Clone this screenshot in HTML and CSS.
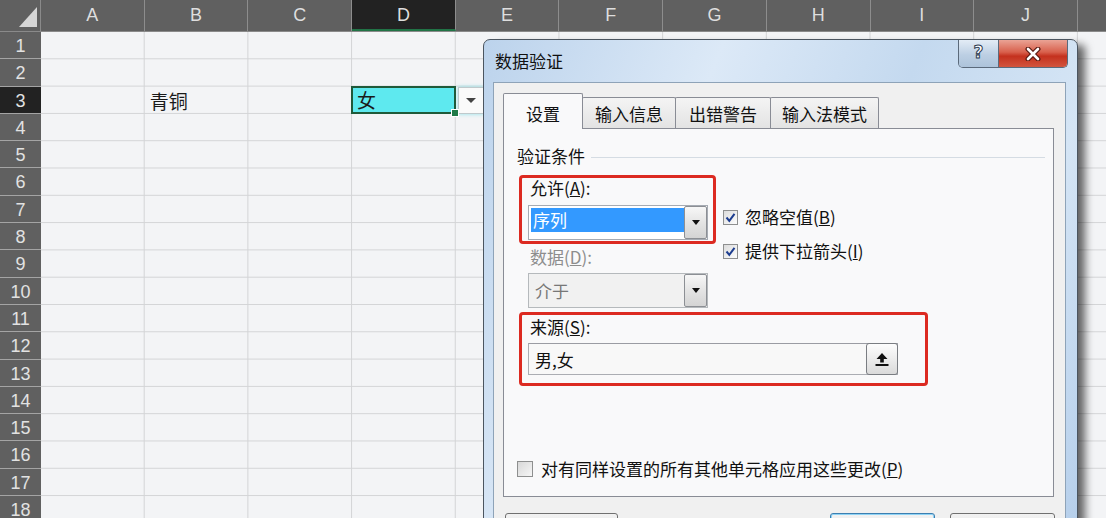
FILE: index.html
```html
<!DOCTYPE html>
<html lang="zh-CN">
<head>
    <meta charset="UTF-8">
    <meta name="viewport" content="width=device-width, initial-scale=1.0">
    <title>数据验证</title>
    <link rel="stylesheet" href="styles.css">
</head>
<body>
    <div class="sheet">
        <div class="col-heads">
            <div class="corner"><span class="corner-tri"></span></div>
            <div class="col-head">A</div>
            <div class="col-head">B</div>
            <div class="col-head">C</div>
            <div class="col-head active">D</div>
            <div class="col-head">E</div>
            <div class="col-head">F</div>
            <div class="col-head">G</div>
            <div class="col-head">H</div>
            <div class="col-head">I</div>
            <div class="col-head">J</div>
            <div class="col-head"></div>
        </div>
        <div class="sheet-body">
            <div class="row-heads">
                <div class="row-head">1</div>
                <div class="row-head">2</div>
                <div class="row-head active">3</div>
                <div class="row-head">4</div>
                <div class="row-head">5</div>
                <div class="row-head">6</div>
                <div class="row-head">7</div>
                <div class="row-head">8</div>
                <div class="row-head">9</div>
                <div class="row-head">10</div>
                <div class="row-head">11</div>
                <div class="row-head">12</div>
                <div class="row-head">13</div>
                <div class="row-head">14</div>
                <div class="row-head">15</div>
                <div class="row-head">16</div>
                <div class="row-head">17</div>
                <div class="row-head">18</div>
            </div>
            <div class="cells">
                <div class="cell cell-b3">青铜</div>
                <div class="cell cell-d3">女<span class="fill-handle"></span></div>
                <div class="cell-drop"><i></i></div>
            </div>
        </div>
    </div>

    <div class="dialog">
        <div class="titlebar">
            <span class="title">数据验证</span>
            <div class="caption-btns">
                <span class="cap-help">?</span>
                <span class="cap-close">
                    <svg width="16" height="14" viewBox="0 0 16 14">
                        <path d="M3 2 L13 12 M13 2 L3 12" stroke="#5a1a12" stroke-width="5" stroke-linecap="round"/>
                        <path d="M3 2 L13 12 M13 2 L3 12" stroke="#fff" stroke-width="2.6" stroke-linecap="round"/>
                    </svg>
                </span>
            </div>
        </div>

        <div class="client">
            <div class="tabs">
                <div class="tab active">设置</div>
                <div class="tab tab-info">输入信息</div>
                <div class="tab tab-error">出错警告</div>
                <div class="tab tab-ime">输入法模式</div>
            </div>

            <div class="panel">
                <div class="group-title"><span>验证条件</span><i class="rule"></i></div>

                <div class="cond">
                    <div class="cond-left">
                        <div class="mark allow">
                            <div class="label">允许(<u>A</u>):</div>
                            <div class="combo">
                                <span class="combo-val"><span class="selected">序列</span></span>
                                <span class="drop-btn"><i></i></span>
                            </div>
                        </div>
                        <div class="label dim data-label">数据(<u>D</u>):</div>
                        <div class="combo disabled data-combo">
                            <span class="combo-val">介于</span>
                            <span class="drop-btn"><i></i></span>
                        </div>
                    </div>
                    <div class="cond-right">
                        <div class="check">
                            <span class="box"><svg width="11" height="11" viewBox="0 0 11 11"><path d="M1.5 5.5 L4.3 8.8 L9.5 1.8" fill="none" stroke="#1d3d8f" stroke-width="2"/></svg></span>
                            <span>忽略空值(<u>B</u>)</span>
                        </div>
                        <div class="check second">
                            <span class="box"><svg width="11" height="11" viewBox="0 0 11 11"><path d="M1.5 5.5 L4.3 8.8 L9.5 1.8" fill="none" stroke="#1d3d8f" stroke-width="2"/></svg></span>
                            <span>提供下拉箭头(<u>I</u>)</span>
                        </div>
                    </div>
                </div>

                <div class="mark source">
                    <div class="label">来源(<u>S</u>):</div>
                    <div class="textbox">
                        <span class="text-val">男,女</span>
                        <span class="ref-btn">
                            <svg width="16" height="16" viewBox="0 0 16 16">
                                <path d="M8 2 L2.5 8 H6.2 V11.5 H9.8 V8 H13.5 Z" fill="#111"/>
                                <rect x="1.5" y="13" width="13" height="2" fill="#111"/>
                            </svg>
                        </span>
                    </div>
                </div>

                <div class="check apply">
                    <span class="box empty"></span>
                    <span>对有同样设置的所有其他单元格应用这些更改(<u>P</u>)</span>
                </div>
            </div>

            <div class="buttons">
                <div class="btn btn-clear"></div>
                <div class="btn btn-ok"></div>
                <div class="btn btn-cancel"></div>
            </div>
        </div>
    </div>
</body>
</html>
```

FILE: styles.css
```css
body {
    margin: 0;
    width: 1106px;
    height: 518px;
    overflow: hidden;
    background-color: #f3f4f6;
    font-family: "Liberation Sans", Arial, sans-serif;
    position: relative;
}

/* spreadsheet */
.sheet {
    display: flex;
    flex-direction: column;
}
.col-heads {
    display: flex;
    height: 32px;
    background: #606060;
    border-bottom: 1px solid #8a8a8a;
    box-sizing: border-box;
}
.corner {
    width: 41px;
    flex: none;
    position: relative;
    border-right: 1px solid #8a8a8a;
    box-sizing: border-box;
}
.corner-tri {
    position: absolute;
    right: 3px;
    bottom: 4px;
    width: 0;
    height: 0;
    border-left: 18px solid transparent;
    border-bottom: 20px solid #d6d6d6;
}
.col-head {
    width: 103.7px;
    flex: none;
    box-sizing: border-box;
    border-right: 1px solid #8d8d8d;
    color: #dedede;
    font-size: 18px;
    line-height: 31px;
    text-align: center;
}
.col-head.active {
    background: #222;
    border-bottom: 2px solid #217346;
    line-height: 30px;
}
.sheet-body {
    display: flex;
}
.row-heads {
    width: 41px;
    flex: none;
    background: #606060;
}
.row-head {
    height: 27.3px;
    box-sizing: border-box;
    border-bottom: 1px solid #a4a4a4;
    color: #e2e2e2;
    font-size: 18px;
    line-height: 28px;
    text-align: center;
}
.row-head.active {
    background: #222;
}
.cells {
    display: grid;
    grid-template-columns: repeat(11, 103.7px);
    grid-template-rows: repeat(18, 27.3px);
    background-image:
        linear-gradient(to right, transparent calc(100% - 1px), #d3d4d6 0),
        linear-gradient(to bottom, transparent calc(100% - 1px), #d3d4d6 0);
    background-size: 103.7px 27.3px;
}
.cell {
    font-family: "Noto Sans CJK SC", sans-serif;
    font-size: 19px;
    color: #1a1a1a;
    padding-left: 5px;
    display: flex;
    align-items: center;
}
.cell-b3 {
    grid-column: 2;
    grid-row: 3;
}
.cell-d3 {
    grid-column: 4;
    grid-row: 3;
    position: relative;
    background: #5ee9ef;
    border: 2px solid #1f5a3a;
    margin: -1px 0 0 -1px;
    padding-left: 4px;
}
.fill-handle {
    position: absolute;
    right: -5px;
    bottom: -5px;
    width: 6px;
    height: 6px;
    background: #1f7a48;
    border: 1px solid #fff;
}
.cell-drop {
    grid-column: 5;
    grid-row: 3;
    width: 24px;
    margin-left: 2px;
    background: #fafafa;
    border: 1px solid #bfc9cc;
    box-shadow: 0 0 4px #8fe3ea;
    display: flex;
    align-items: center;
    justify-content: center;
}
.cell-drop i {
    width: 0;
    height: 0;
    border-left: 5px solid transparent;
    border-right: 5px solid transparent;
    border-top: 5px solid #444;
}

/* dialog */
.dialog {
    position: absolute;
    left: 483px;
    top: 39px;
    width: 595px;
    height: 520px;
    box-sizing: border-box;
    border: 1px solid #4b5560;
    border-radius: 7px 7px 0 0;
    background: linear-gradient(112deg, #bcd3ec 0%, #dce9f7 30%, #c4d9ef 55%, #d5e5f5 78%, #b3cdea 100%);
    box-shadow: 10px 3px 8px -3px rgba(0, 0, 0, 0.6);
    font-family: "Noto Sans CJK SC", sans-serif;
    font-size: 17px;
    color: #111;
}
.titlebar {
    height: 42px;
    display: flex;
    justify-content: space-between;
    padding: 0 9px 0 11px;
}
.title {
    line-height: 20px;
    padding-top: 11px;
}
.caption-btns {
    display: flex;
    height: 27px;
    border: 1px solid #5b6a7b;
    border-top: none;
    border-radius: 0 0 5px 5px;
    overflow: hidden;
}
.cap-help {
    width: 39px;
    background: linear-gradient(#e3ecf6, #bccfe3 55%, #adc3da);
    border-right: 1px solid #5b6a7b;
    text-align: center;
    font-family: "DejaVu Sans", sans-serif;
    font-size: 17px;
    font-weight: bold;
    line-height: 25px;
    color: #fff;
    -webkit-text-stroke: 1px #2c3b50;
}
.cap-close {
    width: 68px;
    background: linear-gradient(#eaa395, #d8604c 45%, #c4311e 60%, #d2553e);
    display: flex;
    align-items: center;
    justify-content: center;
}
.client {
    margin: 0 11px 0 9px;
    border: 1px solid #8ea3b8;
    background: #f0f0f0;
    padding: 10px 11px 0 9px;
    height: 480px;
}
.tabs {
    display: flex;
    align-items: flex-end;
    height: 35px;
}
.tab {
    box-sizing: border-box;
    height: 31px;
    border: 1px solid #898c95;
    border-bottom: none;
    border-radius: 2px 2px 0 0;
    margin-left: -1px;
    background: linear-gradient(#f4f4f4, #e3e3e3);
    line-height: 20px;
    padding-top: 6px;
    text-align: center;
}
.tab.active {
    width: 80px;
    height: 36px;
    margin-left: 0;
    margin-bottom: -1px;
    padding-top: 10px;
    background: #f9f9fa;
    position: relative;
    z-index: 1;
}
.tab-info { width: 94px; }
.tab-error { width: 96px; }
.tab-ime { width: 109px; }
.panel {
    box-sizing: border-box;
    width: 551px;
    height: 369px;
    border: 1px solid #898c95;
    background: #f9f9fa;
    padding: 17px 0 0 13px;
}
.group-title {
    display: flex;
    align-items: center;
    line-height: 20px;
}
.group-title .rule {
    flex: 1;
    height: 0;
    border-top: 1px solid #d5dce3;
    margin: 2px 8px 0 6px;
}
.cond {
    display: flex;
    margin: 9px 0 0 2px;
}
.cond-left {
    width: 197px;
}
.mark {
    border: 3px solid #dc2a21;
    border-radius: 4px;
    padding: 0 5px 1px 6px;
}
.label {
    line-height: 20px;
    padding-left: 2px;
}
.label.dim {
    color: #8d8d8d;
}
.allow .label {
    margin-bottom: 7px;
}
.combo {
    box-sizing: border-box;
    width: 180px;
    height: 35px;
    border: 1px solid #a6abb3;
    background: #fff;
    display: flex;
    padding: 2px 1px 2px 2px;
}
.combo-val {
    flex: 1;
    line-height: 24px;
    align-self: flex-start;
}
.combo-val .selected {
    display: block;
    background: #3399ff;
    color: #fff;
    padding-left: 2px;
    height: 24px;
}
.drop-btn {
    width: 23px;
    margin: -2px -1px -2px 0;
    box-sizing: border-box;
    border: 1px solid #8c8f94;
    border-radius: 2px;
    background: linear-gradient(#f7f7f7, #e4e4e4 50%, #d4d4d4);
    display: flex;
    align-items: center;
    justify-content: center;
}
.drop-btn i {
    width: 0;
    height: 0;
    border-left: 4px solid transparent;
    border-right: 4px solid transparent;
    border-top: 5px solid #111;
}
.data-label {
    margin: 3px 0 0 9px;
}
.data-combo {
    margin: 6px 0 0 9px;
    background: #f1f1f1;
    border-color: #b5b9bc;
    color: #777;
}
.data-combo .combo-val {
    padding-left: 4px;
    line-height: 29px;
}
.cond-right {
    margin-left: 7px;
    padding-top: 32px;
}
.check {
    display: flex;
    align-items: center;
    line-height: 20px;
    gap: 7px;
}
.check.second {
    margin-top: 14px;
}
.box {
    box-sizing: border-box;
    width: 15px;
    height: 15px;
    border: 1px solid #8e8f8f;
    background: linear-gradient(135deg, #dcdcdc, #fdfdfd);
    display: flex;
    align-items: center;
    justify-content: center;
}
.source {
    width: 409px;
    box-sizing: border-box;
    margin: 4px 0 0 2px;
    padding: 2px 0 8px 6px;
}
.source .label {
    margin-bottom: 6px;
}
.textbox {
    box-sizing: border-box;
    width: 370px;
    height: 32px;
    border: 1px solid #abadb3;
    border-top-color: #9a9ca3;
    background: #f8f8f8;
    display: flex;
    align-items: center;
    padding-left: 6px;
}
.text-val {
    flex: 1;
}
.ref-btn {
    box-sizing: border-box;
    width: 32px;
    height: 32px;
    margin-right: -1px;
    border: 1px solid #7a7d82;
    border-radius: 3px;
    background: linear-gradient(#fdfdfd, #ececec 50%, #dadada);
    display: flex;
    align-items: center;
    justify-content: center;
}
.apply {
    margin-top: 73px;
    gap: 8px;
}
.box.empty {
    width: 16px;
    height: 16px;
    background: linear-gradient(135deg, #d8d8d8, #f6f6f6);
}
.buttons {
    display: flex;
    margin: 16px -1px 0 2px;
    gap: 15px;
}
.btn {
    box-sizing: border-box;
    height: 30px;
    width: 105px;
    border: 1px solid #707070;
    border-radius: 3px;
    background: linear-gradient(#f2f2f2, #e2e2e2);
}
.btn-clear {
    width: 113px;
    margin-right: auto;
}
.btn-ok {
    border-color: #3c7fb1;
    box-shadow: inset 0 0 0 1px #8fd3f5;
}
```
